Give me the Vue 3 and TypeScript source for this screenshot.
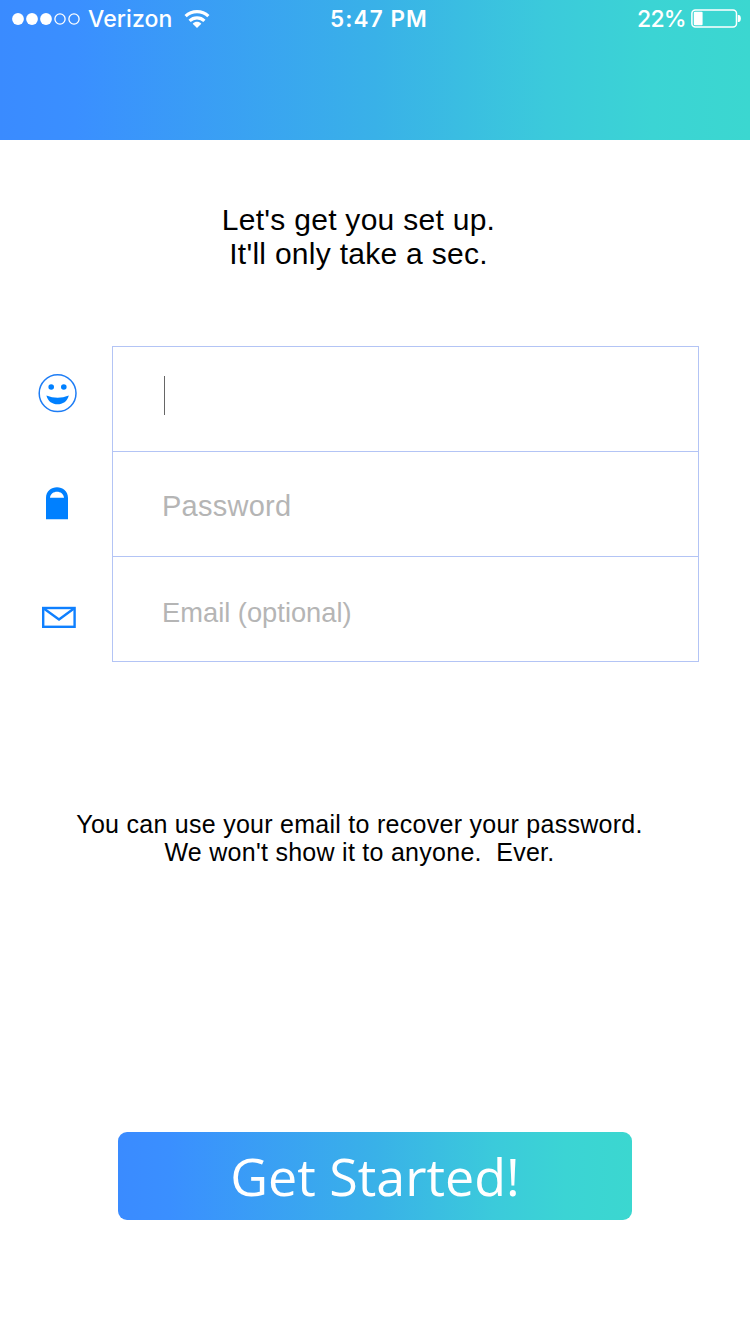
<script setup lang="ts">
import { ref } from 'vue'

interface Field {
  name: 'username' | 'password' | 'email'
  type: string
  placeholder: string
}

const fields: Field[] = [
  { name: 'username', type: 'text', placeholder: '' },
  { name: 'password', type: 'password', placeholder: 'Password' },
  { name: 'email', type: 'email', placeholder: 'Email (optional)' },
]
const values = ref<Record<string, string>>({ username: '', password: '', email: '' })
</script>

<template>
  <main class="screen">
    <header class="header">
      <div class="status">
        <div class="carrier">
          <svg class="signal" width="70" height="14" viewBox="0 0 70 14">
            <g fill="#fff">
              <circle cx="7" cy="7" r="5.9" />
              <circle cx="21" cy="7" r="5.9" />
              <circle cx="35" cy="7" r="5.9" />
            </g>
            <g fill="none" stroke="#fff" stroke-width="1.3">
              <circle cx="49" cy="7" r="5.1" />
              <circle cx="63" cy="7" r="5.1" />
            </g>
          </svg>
          <span class="carrier-name">Verizon</span>
          <svg class="wifi" width="26" height="19" viewBox="0 0 26 19">
            <g fill="none" stroke="#fff" stroke-width="3.2">
              <path d="M1.6 6.2C8 .1 18 .1 24.4 6.2" />
              <path d="M5.6 10.8C9.8 6.8 16.2 6.8 20.4 10.8" />
            </g>
            <path d="M8.7 13.7C11.2 11.2 14.8 11.2 17.3 13.7L13 18Z" fill="#fff" />
          </svg>
        </div>
        <span class="time">5:47 PM</span>
        <div class="power">
          <span class="percent">22%</span>
          <svg width="50" height="20" viewBox="0 0 50 20">
            <rect x=".9" y=".9" width="44.6" height="17.2" rx="3.5" fill="none" stroke="#fff" stroke-width="1.5" />
            <rect x="2.8" y="2.8" width="8.8" height="13.4" rx="1" fill="#fff" />
            <path d="M46.8 6H47.6C50.6 6 50.6 13 47.6 13H46.8Z" fill="#fff" />
          </svg>
        </div>
      </div>
    </header>

    <h1 class="title">Let's get you set up.<br />It'll only take a sec.</h1>

    <form class="form" @submit.prevent>
      <div class="icons">
        <svg class="smile" width="40" height="40" viewBox="0 0 40 40">
          <circle cx="19.6" cy="20.2" r="18.4" fill="none" stroke="#1e7df5" stroke-width="1.5" />
          <circle cx="13.2" cy="14" r="2.8" fill="#0080ff" />
          <circle cx="25.8" cy="14" r="2.8" fill="#0080ff" />
          <path d="M8.4 22.4Q19.6 27.2 30.8 22.4C28.2 34.2 11 34.2 8.4 22.4Z" fill="#0080ff" />
        </svg>
        <svg class="lock" width="22" height="33" viewBox="0 0 22 33">
          <path
            fill="#0080ff"
            fill-rule="evenodd"
            d="M0 32.3V11C0-3.3 22-3.3 22 11V32.3ZM4 10.8H18C17.5 2.6 4.5 2.6 4 10.8Z"
          />
        </svg>
        <svg class="mail" width="34" height="23" viewBox="0 0 34 23">
          <g fill="none" stroke="#0f80ff" stroke-width="2.4">
            <rect x="1.2" y="2" width="31.4" height="18.8" />
            <path d="M1.5 2.3L17 13.4L32.3 2.3" />
          </g>
        </svg>
      </div>
      <div class="fields">
        <label v-for="field in fields" :key="field.name" class="field">
          <span v-if="field.name === 'username'" class="caret"></span>
          <input
            v-model="values[field.name]"
            class="input"
            :class="field.name"
            :type="field.type"
            :placeholder="field.placeholder"
            :aria-label="field.name"
          />
        </label>
      </div>
    </form>

    <p class="note">You can use your email to recover your password.<br />We won't show it to anyone.&nbsp; Ever.</p>

    <button class="start" type="button">Get Started!</button>
  </main>
</template>

<style>
body {
  margin: 0;
  background: #fff;
}
</style>

<style scoped>
.screen {
  display: flex;
  flex-direction: column;
  width: 750px;
  height: 1334px;
  overflow: hidden;
  background: #fff;
  color: #000;
  font-family: 'Liberation Sans', Arial, sans-serif;
}
.header,
.start {
  background: linear-gradient(90deg, #3a8bff 0%, #3a8fff 10%, #39b1e8 50%, #3bcadb 73%, #3bd4d4 87%, #3bd7d0 100%);
}
.header {
  height: 140px;
  flex: none;
}
.status {
  display: grid;
  grid-template-columns: 1fr auto 1fr;
  align-items: center;
  height: 38px;
  padding: 0 9px 0 11px;
  color: #fff;
  font-family: Inter, sans-serif;
  font-size: 23px;
  line-height: 38px;
}
.carrier,
.power {
  display: flex;
  align-items: center;
}
.carrier-name {
  margin-left: 7px;
  font-weight: 500;
  letter-spacing: 0.1px;
}
.wifi {
  margin-left: 12px;
}
.time {
  position: relative;
  left: 3px;
  font-weight: 600;
  font-size: 22.5px;
  letter-spacing: 1.1px;
}
.power {
  justify-content: flex-end;
  gap: 5px;
}
.percent {
  font-weight: 500;
  letter-spacing: -0.7px;
}
.title {
  width: 717px;
  margin: 63px 0 0;
  font-size: 30px;
  font-weight: 400;
  line-height: 33.5px;
  letter-spacing: 0.28px;
  text-align: center;
}
.form {
  display: flex;
  margin-top: 76px;
}
.icons {
  display: flex;
  flex-direction: column;
  width: 112px;
}
.smile {
  margin: 27px 0 0 38px;
}
.lock {
  margin: 74px 0 0 46px;
}
.mail {
  margin: 86px 0 0 42px;
}
.fields {
  box-sizing: border-box;
  width: 587px;
  height: 316px;
  border: 1px solid #b3c4f5;
}
.field {
  position: relative;
  box-sizing: border-box;
  display: block;
  height: 105px;
}
.field:first-child {
  height: 104px;
}
.field + .field {
  border-top: 1px solid #b3c4f5;
}
.caret {
  position: absolute;
  top: 29px;
  left: 51px;
  width: 1px;
  height: 39px;
  background: #666;
}
.input {
  box-sizing: border-box;
  width: 100%;
  height: 100%;
  padding: 4px 49px 0;
  border: 0;
  outline: 0;
  background: transparent;
  color: #000;
  font: 29px 'Liberation Sans', Arial, sans-serif;
}
.input.password {
  letter-spacing: 0.25px;
}
.input.email {
  padding-top: 8px;
  font-size: 27.3px;
}
.input::placeholder {
  color: #b5b5b5;
  opacity: 1;
}
.note {
  width: 719px;
  margin: 148px 0 0;
  font-size: 25px;
  line-height: 28px;
  letter-spacing: 0.27px;
  text-align: center;
}
.start {
  width: 514px;
  height: 88px;
  margin: 266px 0 0 118px;
  padding: 0;
  border: 0;
  border-radius: 9px;
  color: #fff;
  font: 52px/86px 'Open Sans', 'Noto Sans', sans-serif;
}
</style>
